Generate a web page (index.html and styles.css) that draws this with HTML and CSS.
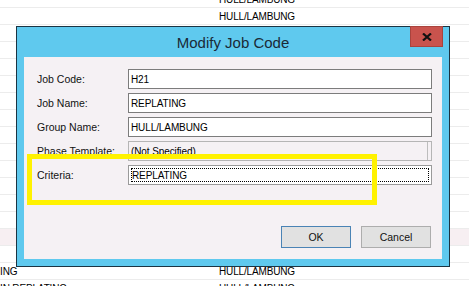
FILE: index.html
```html
<!DOCTYPE html>
<html lang="en">
<head>
  <meta charset="UTF-8" />
  <title>Modify Job Code</title>
  <link rel="stylesheet" href="styles.css">
</head>
<body>
  <div class="grid">
    <div class="row"><span class="c1"></span><span class="c2">HULL/LAMBUNG</span></div>
    <div class="row"><span class="c1"></span><span class="c2">HULL/LAMBUNG</span></div>
    <div class="row"></div>
    <div class="row"></div>
    <div class="row"></div>
    <div class="row"></div>
    <div class="row"></div>
    <div class="row"></div>
    <div class="row"></div>
    <div class="row"></div>
    <div class="row"></div>
    <div class="row"></div>
    <div class="row"></div>
    <div class="row"></div>
    <div class="row hover"></div>
    <div class="row"></div>
    <div class="row"><span class="c1">ING</span><span class="c2">HULL/LAMBUNG</span></div>
    <div class="row"><span class="c1">IN REPLATING</span><span class="c2">HULL/LAMBUNG</span></div>
  </div>

  <div class="dialog">
    <div class="titlebar">
      <span class="title">Modify Job Code</span>
      <button class="close" aria-label="Close">
        <svg width="10" height="8" viewBox="0 0 10 8"><path d="M1 0.5 L9 7.5 M9 0.5 L1 7.5" stroke="#111" stroke-width="2.2"/></svg>
      </button>
    </div>
    <div class="client">
      <div class="form">
        <label>Job Code:</label>
        <div class="field">H21</div>
        <label>Job Name:</label>
        <div class="field">REPLATING</div>
        <label>Group Name:</label>
        <div class="field">HULL/LAMBUNG</div>
        <label>Phase Template:</label>
        <div class="field disabled">(Not Specified)</div>
        <label>Criteria:</label>
        <div class="field focused"><span class="focus">REPLATING</span></div>
      </div>
      <div class="actions">
        <button class="btn default">OK</button>
        <button class="btn">Cancel</button>
      </div>
    </div>
  </div>

  <div class="highlight"></div>
</body>
</html>
```

FILE: styles.css
```css
body {
  margin: 0;
  font-family: "Liberation Sans", Arial, sans-serif;
  background: #fff;
  overflow: hidden;
}
.grid {
  margin-top: -9px;
}
.row {
  height: 17px;
  box-sizing: border-box;
  border-bottom: 1px solid #ececec;
  display: flex;
  align-items: center;
  font-size: 10px;
  letter-spacing: -0.15px;
  color: #000;
}
.row.hover {
  background: #f7eff2;
}
.c1 {
  width: 219px;
}

/* dialog window */
.dialog {
  position: absolute;
  left: 16px;
  top: 26px;
  width: 434px;
  height: 241px;
  box-sizing: border-box;
  border: 1px solid #1b3442;
  background: #5fc9ee;
  padding: 0 7px 7px 7px;
  display: flex;
  flex-direction: column;
}
.titlebar {
  height: 30px;
  position: relative;
  display: flex;
  align-items: center;
  justify-content: center;
}
.title {
  font-size: 15px;
  color: #1a2a37;
  margin-top: 1px;
}
.close {
  position: absolute;
  top: -1px;
  right: -1px;
  width: 33px;
  height: 21px;
  border: 1px solid #a9433d;
  background: #c9534d;
  padding: 0;
  display: flex;
  align-items: center;
  justify-content: center;
}
.client {
  flex: 1;
  background: #f5f1f4;
  display: flex;
  flex-direction: column;
}
.form {
  display: grid;
  grid-template-columns: 91px 1fr;
  grid-auto-rows: 20px;
  row-gap: 4px;
  margin: 12px 10px 0 13px;
}
.form label {
  font-size: 10.5px;
  color: #111;
  display: flex;
  align-items: center;
}
.field {
  box-sizing: border-box;
  border: 1px solid #7c7c7c;
  background: #fff;
  font-size: 10px;
  letter-spacing: -0.1px;
  color: #000;
  padding: 0 2px;
  display: flex;
  align-items: center;
}
.field.disabled {
  border-color: #b5b5b5;
  background: #f5f1f4;
  box-shadow: inset -3px 0 0 #f5f1f4, inset -4px 0 0 #bdbdbd;
}
.field.focused {
  padding: 2px;
  border-color: #9a9a9a;
}
.focus {
  flex: 1;
  height: 100%;
  box-sizing: border-box;
  border: 1px dotted #000;
  display: flex;
  align-items: center;
}
.actions {
  margin-top: 41px;
  padding-right: 11px;
  display: flex;
  justify-content: flex-end;
  gap: 10px;
}
.btn {
  width: 70px;
  height: 22px;
  box-sizing: border-box;
  border: 1px solid #adadad;
  background: #e1e1e1;
  font-family: "Liberation Sans", Arial, sans-serif;
  font-size: 10.5px;
  color: #111;
  padding: 0;
}
.btn.default {
  border-color: #4a83b5;
}

/* annotation drawn over the screenshot */
.highlight {
  position: absolute;
  left: 27px;
  top: 154px;
  width: 350px;
  height: 51px;
  box-sizing: border-box;
  border: 5px solid #fff200;
}
```
